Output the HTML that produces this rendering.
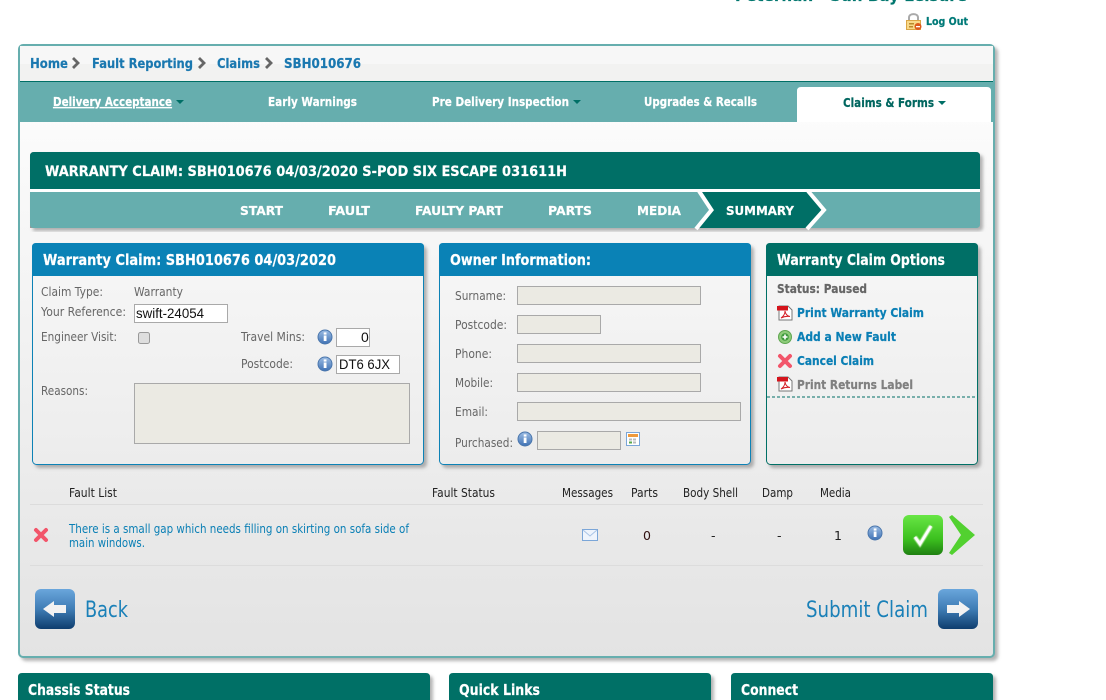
<!DOCTYPE html>
<html lang="en"><head><meta charset="utf-8"><title>Warranty Claim</title>
<style>
html,body{margin:0;padding:0;background:#fff;width:1106px;height:700px;overflow:hidden}
svg{display:block;position:absolute;left:0;top:0}
text{font-family:"DejaVu Sans","Liberation Sans",sans-serif;font-size:12.500px;fill:#666}
.b{font-weight:bold;color:#666;fill:currentColor;stroke:currentColor;stroke-width:.22px}
.w{font-weight:bold;color:#fff;fill:currentColor;stroke:currentColor;stroke-width:.22px}
.l{fill:#0a7fb5}
.b.l{color:#0a7fb5}
.h{fill:#222}
.a{font-family:"Liberation Sans",Arial,sans-serif;font-size:14px;fill:#111}
.f{fill:#ebeae3;stroke:#a9a9a9}
.i{fill:#fff;stroke:#a9a9a9}
.t{font-size:15px}
.c{font-size:13.500px;color:#1a78b0}
</style></head><body>
<svg width="1106" height="700" viewBox="0 0 1106 700" xmlns="http://www.w3.org/2000/svg">
<defs>
<linearGradient id="gc" x1="0" y1="0" x2="0" y2="1"><stop offset="0" stop-color="#fff"/><stop offset="1" stop-color="#e3e3e3"/></linearGradient>
<linearGradient id="gp" x1="0" y1="0" x2="0" y2="1"><stop offset="0" stop-color="#f7f7f7"/><stop offset="1" stop-color="#ececec"/></linearGradient>
<linearGradient id="gb" x1="0" y1="0" x2="0" y2="1"><stop offset="0" stop-color="#6aa6dc"/><stop offset=".5" stop-color="#3f7db5"/><stop offset="1" stop-color="#0e3d6e"/></linearGradient>
<linearGradient id="gg" x1="0" y1="0" x2="0" y2="1"><stop offset="0" stop-color="#68e645"/><stop offset=".6" stop-color="#3cc01f"/><stop offset="1" stop-color="#1f8012"/></linearGradient>
<linearGradient id="gi" x1="0" y1="0" x2="0" y2="1"><stop offset="0" stop-color="#9dbde4"/><stop offset="1" stop-color="#3f72b4"/></linearGradient>
<filter id="s" x="-5%" y="-5%" width="110%" height="110%"><feDropShadow dx="3" dy="3" stdDeviation="1.500" flood-color="#777" flood-opacity=".55"/></filter>
<filter id="glow" x="-30%" y="-30%" width="160%" height="160%"><feGaussianBlur stdDeviation=".6"/></filter>
<g id="info"><circle r="7" fill="url(#gi)" stroke="#4a76ac"/><rect x="-1.300" y="-1.500" width="2.800" height="5.500" fill="#fff"/><rect x="-1.300" y="-4.600" width="2.800" height="2.200" fill="#fff"/></g>
<g id="pdf"><path d="M2 1H11L15 5V15H2Z" fill="#fff" stroke="#777"/><rect x="0" y="1" width="11" height="4.500" fill="#d4141c"/><path d="M4 13C7 11 8 8 8 6C8.500 9 10 11 13 11.500C10 11 7 11.500 4 13Z" fill="none" stroke="#d4232a"/></g>
<g id="x"><path d="M-5 -5L5 5M5 -5L-5 5" stroke="#f2556a" stroke-width="4" stroke-linecap="round"/></g>
</defs>

<!-- header -->
<text x="735" y="1" textLength="232" lengthAdjust="spacingAndGlyphs" class="b" style="font-size:16px;color:#00766e">Peterhan - Sun Bay Leisure</text>
<path d="M909 20V17.500C909 13 918 13 918 17.500V20" fill="none" stroke="#aaa" stroke-width="2"/>
<rect x="906.500" y="20.500" width="14" height="9" fill="#f8d98a" stroke="#dba645"/>
<rect x="909" y="23" width="5" height="1.500" fill="#b98a2c"/><rect x="909" y="26" width="4" height="1.500" fill="#b98a2c"/>
<circle cx="918" cy="26.500" r="3.500" fill="#dd5a1c"/><rect x="916" y="26" width="4" height="1.300" fill="#fff"/>
<text x="926" y="25" textLength="42" lengthAdjust="spacingAndGlyphs" class="b" style="font-size:10.500px;color:#007a78">Log Out</text>

<!-- main panel -->
<rect x="19" y="45" width="975" height="612" rx="4" fill="url(#gc)" stroke="#66aeae" stroke-width="2" filter="url(#s)"/>
<rect x="20" y="46" width="973" height="18" fill="#f7f7f7"/>
<rect x="20" y="64" width="973" height="17" fill="#f2f2f1"/>
<rect x="20" y="81" width="973" height="1" fill="#006f66"/>
<rect x="20" y="82" width="973" height="40" fill="#66aeae"/>
<path d="M797 122V91Q797 87 801 87H987Q991 87 991 91V122Z" fill="#fff"/>

<text x="30" y="68" textLength="38" lengthAdjust="spacingAndGlyphs" class="b c">Home</text>
<path d="M73 58L78 63L73 68" fill="none" stroke="#666" stroke-width="2.800"/>
<text x="92" y="68" textLength="101" lengthAdjust="spacingAndGlyphs" class="b c">Fault Reporting</text>
<path d="M199 58L204 63L199 68" fill="none" stroke="#666" stroke-width="2.800"/>
<text x="217" y="68" textLength="43" lengthAdjust="spacingAndGlyphs" class="b c">Claims</text>
<path d="M266 58L271 63L266 68" fill="none" stroke="#666" stroke-width="2.800"/>
<text x="284" y="68" textLength="77" lengthAdjust="spacingAndGlyphs" class="b c">SBH010676</text>

<text x="53" y="106" textLength="119" lengthAdjust="spacingAndGlyphs" class="w" text-decoration="underline">Delivery Acceptance</text>
<path d="M176 100H184L180 104Z" fill="#006f66"/>
<text x="268" y="106" textLength="89" lengthAdjust="spacingAndGlyphs" class="w">Early Warnings</text>
<text x="432" y="106" textLength="137" lengthAdjust="spacingAndGlyphs" class="w">Pre Delivery Inspection</text>
<path d="M573 100H581L577 104Z" fill="#006f66"/>
<text x="644" y="106" textLength="113" lengthAdjust="spacingAndGlyphs" class="w">Upgrades &amp; Recalls</text>
<text x="843" y="107" textLength="91" lengthAdjust="spacingAndGlyphs" class="b" style="color:#00665f">Claims &amp; Forms</text>
<path d="M938 101H946L942 105Z" fill="#006f66"/>

<!-- title + steps -->
<path d="M30 228V156Q30 152 34 152H976Q980 152 980 156V224Q980 228 976 228Z" fill="#999" filter="url(#s)"/>
<path d="M30 189V156Q30 152 34 152H976Q980 152 980 156V189Z" fill="#006f66"/>
<rect x="30" y="189" width="950" height="3" fill="#fff"/>
<path d="M30 192H980V224Q980 228 976 228H34Q30 228 30 224Z" fill="#66aeae"/>
<path d="M700 192H808L824 210L806 228H697L711 210Z" fill="#006f66"/>
<path d="M699 191L711.500 210L696 229M808 191L824 210L807 229" fill="none" stroke="#fff" stroke-width="4"/>
<text x="45" y="176" textLength="522" lengthAdjust="spacingAndGlyphs" class="w" style="font-size:14px">WARRANTY CLAIM: SBH010676 04/03/2020 S-POD SIX ESCAPE 031611H</text>
<text x="240" y="215" textLength="43" lengthAdjust="spacingAndGlyphs" class="w">START</text>
<text x="328" y="215" textLength="42" lengthAdjust="spacingAndGlyphs" class="w">FAULT</text>
<text x="415" y="215" textLength="88" lengthAdjust="spacingAndGlyphs" class="w">FAULTY PART</text>
<text x="548" y="215" textLength="44" lengthAdjust="spacingAndGlyphs" class="w">PARTS</text>
<text x="637" y="215" textLength="44" lengthAdjust="spacingAndGlyphs" class="w">MEDIA</text>
<text x="726" y="215" textLength="68" lengthAdjust="spacingAndGlyphs" class="w">SUMMARY</text>

<!-- panel 1 -->
<rect x="32.500" y="243.500" width="391" height="221" rx="4" fill="url(#gp)" stroke="#0a82b6" filter="url(#s)"/>
<path d="M32 276V247Q32 243 36 243H420Q424 243 424 247V276Z" fill="#0a82b6"/>
<text x="43" y="265" textLength="293" lengthAdjust="spacingAndGlyphs" class="w t">Warranty Claim: SBH010676 04/03/2020</text>
<text x="41" y="296" textLength="62" lengthAdjust="spacingAndGlyphs">Claim Type:</text>
<text x="134" y="296" textLength="49" lengthAdjust="spacingAndGlyphs">Warranty</text>
<text x="41" y="316" textLength="85" lengthAdjust="spacingAndGlyphs">Your Reference:</text>
<rect x="134.500" y="304.500" width="93" height="18" class="i"/>
<text x="136" y="318" textLength="68" lengthAdjust="spacingAndGlyphs" class="a">swift-24054</text>
<text x="41" y="341" textLength="76" lengthAdjust="spacingAndGlyphs">Engineer Visit:</text>
<rect x="138.500" y="332.500" width="11" height="11" rx="2" fill="#dedede" stroke="#999"/>
<text x="241" y="341" textLength="64" lengthAdjust="spacingAndGlyphs">Travel Mins:</text>
<use href="#info" x="325" y="337"/>
<rect x="336.500" y="328.500" width="33" height="18" class="i"/>
<text x="361" y="342" class="a">0</text>
<text x="241" y="368" textLength="52" lengthAdjust="spacingAndGlyphs">Postcode:</text>
<use href="#info" x="325" y="364"/>
<rect x="336.500" y="355.500" width="63" height="18" class="i"/>
<text x="339" y="369" textLength="51" lengthAdjust="spacingAndGlyphs" class="a">DT6 6JX</text>
<text x="41" y="395" textLength="47" lengthAdjust="spacingAndGlyphs">Reasons:</text>
<rect x="134.500" y="383.500" width="275" height="60" class="f"/>

<!-- panel 2 -->
<rect x="439.500" y="243.500" width="311" height="221" rx="4" fill="url(#gp)" stroke="#0a82b6" filter="url(#s)"/>
<path d="M439 276V247Q439 243 443 243H747Q751 243 751 247V276Z" fill="#0a82b6"/>
<text x="450" y="265" textLength="141" lengthAdjust="spacingAndGlyphs" class="w t">Owner Information:</text>
<text x="455" y="300" textLength="51" lengthAdjust="spacingAndGlyphs">Surname:</text>
<rect x="517.500" y="286.500" width="183" height="18" class="f"/>
<text x="455" y="329" textLength="52" lengthAdjust="spacingAndGlyphs">Postcode:</text>
<rect x="517.500" y="315.500" width="83" height="18" class="f"/>
<text x="455" y="358" textLength="37" lengthAdjust="spacingAndGlyphs">Phone:</text>
<rect x="517.500" y="344.500" width="183" height="18" class="f"/>
<text x="455" y="387" textLength="38" lengthAdjust="spacingAndGlyphs">Mobile:</text>
<rect x="517.500" y="373.500" width="183" height="18" class="f"/>
<text x="455" y="416" textLength="33" lengthAdjust="spacingAndGlyphs">Email:</text>
<rect x="517.500" y="402.500" width="223" height="18" class="f"/>
<text x="455" y="447" textLength="58" lengthAdjust="spacingAndGlyphs">Purchased:</text>
<use href="#info" x="525" y="439"/>
<rect x="537.500" y="431.500" width="83" height="18" class="f"/>
<rect x="626.500" y="432.500" width="13" height="13" fill="#fff" stroke="#7ba6d8"/>
<rect x="628" y="434" width="10" height="3" fill="#ef9a3c"/>
<rect x="629" y="438.500" width="3" height="2" fill="#bbb"/><rect x="633" y="438.500" width="3" height="2" fill="#bbb"/>
<rect x="629" y="441.500" width="3" height="2" fill="#5aa84a"/><rect x="633" y="441.500" width="3" height="2" fill="#bbb"/>

<!-- panel 3 -->
<rect x="766.500" y="243.500" width="211" height="221" rx="4" fill="url(#gp)" stroke="#006f66" filter="url(#s)"/>
<path d="M766 276V247Q766 243 770 243H974Q978 243 978 247V276Z" fill="#006f66"/>
<text x="777" y="265" textLength="168" lengthAdjust="spacingAndGlyphs" class="w t">Warranty Claim Options</text>
<text x="777" y="293" textLength="90" lengthAdjust="spacingAndGlyphs" class="b">Status: Paused</text>
<use href="#pdf" x="777" y="305"/>
<text x="797" y="317" textLength="127" lengthAdjust="spacingAndGlyphs" class="b l">Print Warranty Claim</text>
<circle cx="785" cy="337" r="6.500" fill="#8ecb7a" stroke="#5fa650"/><circle cx="785" cy="337" r="3.800" fill="#3f9a3c"/><path d="M782.500 337H787.500M785 334.500V339.500" stroke="#fff" stroke-width="1.600"/>
<text x="797" y="341" textLength="99" lengthAdjust="spacingAndGlyphs" class="b l">Add a New Fault</text>
<use href="#x" x="785" y="361"/>
<text x="797" y="365" textLength="77" lengthAdjust="spacingAndGlyphs" class="b l">Cancel Claim</text>
<use href="#pdf" x="777" y="376"/>
<text x="797" y="389" textLength="116" lengthAdjust="spacingAndGlyphs" class="b" style="color:#808080">Print Returns Label</text>
<path d="M767 397H977" stroke="#006f66" stroke-dasharray="3 2"/>

<!-- table -->
<text x="69" y="497" textLength="48" lengthAdjust="spacingAndGlyphs" class="h">Fault List</text>
<text x="432" y="497" textLength="63" lengthAdjust="spacingAndGlyphs" class="h">Fault Status</text>
<text x="562" y="497" textLength="51" lengthAdjust="spacingAndGlyphs" class="h">Messages</text>
<text x="631" y="497" textLength="27" lengthAdjust="spacingAndGlyphs" class="h">Parts</text>
<text x="683" y="497" textLength="55" lengthAdjust="spacingAndGlyphs" class="h">Body Shell</text>
<text x="762" y="497" textLength="31" lengthAdjust="spacingAndGlyphs" class="h">Damp</text>
<text x="820" y="497" textLength="31" lengthAdjust="spacingAndGlyphs" class="h">Media</text>
<rect x="30" y="504" width="953" height="1" fill="#dcdcdc"/>
<rect x="30" y="565" width="953" height="1" fill="#dcdcdc"/>
<use href="#x" x="41" y="535"/>
<text x="69" y="533" textLength="340" lengthAdjust="spacingAndGlyphs" class="l">There is a small gap which needs filling on skirting on sofa side of</text>
<text x="69" y="547" textLength="76" lengthAdjust="spacingAndGlyphs" class="l">main windows.</text>
<rect x="582.500" y="529.500" width="15" height="11" fill="#eef4fc" stroke="#7ba6d8"/>
<path d="M583 530L590 536L597 530" fill="none" stroke="#a9c4e6"/>
<text x="643" y="540" class="h" style="fill:#301010">0</text>
<text x="711" y="540" class="h">-</text>
<text x="777" y="540" class="h">-</text>
<text x="834" y="540" class="h">1</text>
<use href="#info" x="875" y="533"/>
<rect x="903" y="515" width="40" height="40" rx="6" fill="url(#gg)"/>
<path d="M915 537L920 544L931 526" fill="none" stroke="#dff5d0" stroke-width="4" filter="url(#glow)"/>
<path d="M915 537L920 544L931 526" fill="none" stroke="#fff" stroke-width="2.400"/>
<path d="M949 517L952 515L975 535L952 555L949 553L961 535Z" fill="#52d130"/>

<!-- nav buttons -->
<rect x="35" y="589" width="40" height="40" rx="6" fill="url(#gb)"/>
<path d="M43 609L54 601V605H66V613H54V617Z" fill="#f2f2f2"/>
<text x="85" y="617" textLength="43" lengthAdjust="spacingAndGlyphs" class="l" style="font-size:22px;fill:#1a80b8">Back</text>
<text x="806" y="617" textLength="122" lengthAdjust="spacingAndGlyphs" class="l" style="font-size:22px;fill:#1a80b8">Submit Claim</text>
<rect x="938" y="589" width="40" height="40" rx="6" fill="url(#gb)"/>
<path d="M970 609L959 601V605H947V613H959V617Z" fill="#f2f2f2"/>

<!-- bottom panels -->
<path d="M18 705V677Q18 673 22 673H426Q430 673 430 677V705Z" fill="#006f66" filter="url(#s)"/>
<path d="M449 705V677Q449 673 453 673H707Q711 673 711 677V705Z" fill="#006f66" filter="url(#s)"/>
<path d="M731 705V677Q731 673 735 673H989Q993 673 993 677V705Z" fill="#006f66" filter="url(#s)"/>
<text x="28" y="695" textLength="102" lengthAdjust="spacingAndGlyphs" class="w t">Chassis Status</text>
<text x="459" y="695" textLength="81" lengthAdjust="spacingAndGlyphs" class="w t">Quick Links</text>
<text x="741" y="695" textLength="57" lengthAdjust="spacingAndGlyphs" class="w t">Connect</text>
</svg>
</body></html>
